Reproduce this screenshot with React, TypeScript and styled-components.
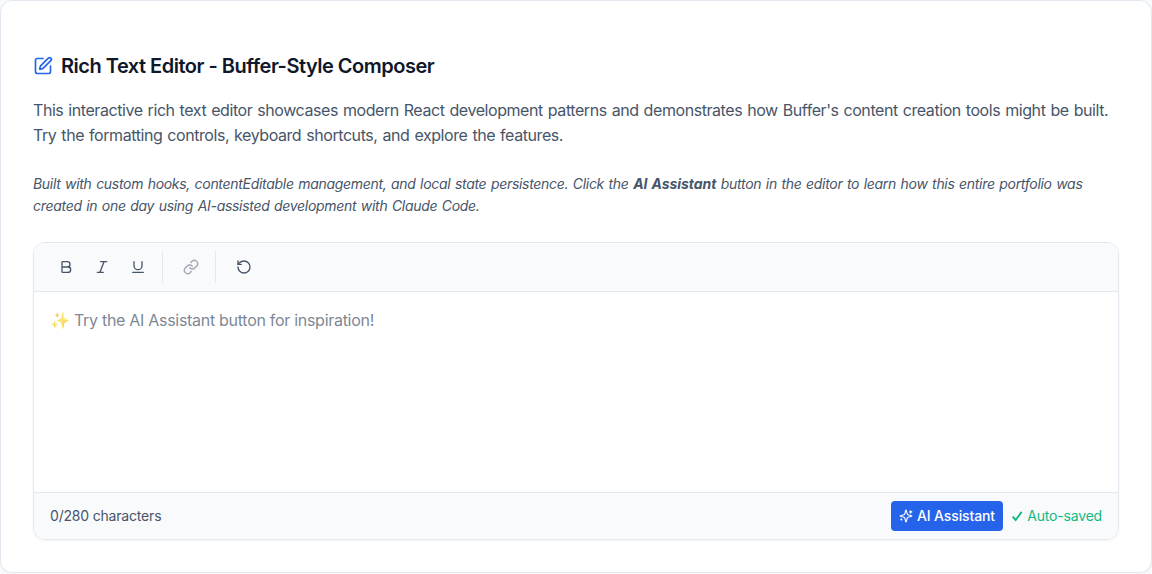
import React from 'react';
import styled, { createGlobalStyle } from 'styled-components';
import { Bold, Italic, Underline, Link, RotateCcw, SquarePen } from 'lucide-react';

const GlobalStyle = createGlobalStyle`
  *, *::before, *::after { box-sizing: border-box; }
  body { margin: 0; background: #f8fafc; font-family: Inter, sans-serif; color: #475569; }
`;
const Card = styled.section`
  height: 573px;
  padding: 52px 32px 32px;
  border: 1px solid #e2e8f0;
  border-radius: 12px;
  background: #fff;
  box-shadow: 0 1px 2px rgba(0, 0, 0, 0.05);
`;
const Title = styled.h3`
  display: flex;
  align-items: center;
  gap: 8px;
  margin: 0;
  font-size: 20px;
  line-height: 26px;
  font-weight: 600;
  letter-spacing: -0.495px;
  color: #0f172a;
`;
const Intro = styled.p`
  margin: 19px 0 0;
  font-size: 16px;
  line-height: 25px;
  letter-spacing: -0.43px;
  word-spacing: 0.9px;
`;
const Note = styled.p`
  margin: 25px 0 0;
  font-size: 14px;
  line-height: 22px;
  font-style: italic;
  letter-spacing: -0.3px;
  word-spacing: 0.9px;

  strong {
    letter-spacing: -0.06px;
  }
`;
const Editor = styled.div`
  margin-top: 25px;
  border: 1px solid #e2e8f0;
  border-radius: 12px;
  overflow: hidden;
  box-shadow: 0 1px 2px rgba(0, 0, 0, 0.05);
`;
const Toolbar = styled.div`
  display: flex;
  align-items: center;
  height: 49px;
  padding: 8px 16px;
  background: #f8fafc;
  border-bottom: 1px solid #e2e8f0;
`;
const Group = styled.div<{ $last?: boolean }>`
  display: flex;
  gap: 4px;
  padding-right: 8px;
  margin-right: 12px;
  border-right: ${(p) => (p.$last ? 'none' : '1px solid #e2e8f0')};
`;
const ToolButton = styled.button`
  display: flex;
  align-items: center;
  justify-content: center;
  width: 32px;
  height: 32px;
  padding: 0;
  border: 0;
  background: none;
  color: #475569;
  &:disabled { opacity: 0.5; }
`;
const Content = styled.div`
  height: 200px;
  padding: 16px;
  font-size: 16px;
  line-height: 25.6px;
  letter-spacing: -0.29px;
  color: #475569;
`;
const Placeholder = styled.span`
  opacity: 0.7;
`;
const Footer = styled.div`
  display: flex;
  align-items: center;
  justify-content: space-between;
  height: 47px;
  padding: 0 16px;
  background: #f8fafc;
  border-top: 1px solid #e2e8f0;
  font-size: 14px;
  line-height: 16px;
  letter-spacing: -0.19px;
`;
const Actions = styled.div`
  display: flex;
  align-items: center;
  gap: 8px;
`;
const AssistantButton = styled.button`
  display: flex;
  align-items: center;
  gap: 4px;
  width: 112px;
  height: 30px;
  padding: 0 8px;
  border: 0;
  border-radius: 4px;
  background: #2563eb;
  color: #fff;
  font: 500 14px/16px Inter, sans-serif;
  letter-spacing: -0.13px;
  white-space: nowrap;
`;
const Saved = styled.span`
  display: flex;
  align-items: center;
  gap: 3px;
  width: 91px;
  color: #10b981;
  white-space: nowrap;
`;

const SparkleIcon = () => (
  <svg width="14" height="14" viewBox="0 0 24 24" fill="none" stroke="currentColor" strokeWidth="2" strokeLinecap="round" strokeLinejoin="round">
    <path d="M9.937 15.5A2 2 0 0 0 8.5 14.063l-6.135-1.582a.5.5 0 0 1 0-.962L8.5 9.936A2 2 0 0 0 9.937 8.5l1.582-6.135a.5.5 0 0 1 .963 0L14.063 8.5A2 2 0 0 0 15.5 9.937l6.135 1.581a.5.5 0 0 1 0 .964L15.5 14.063a2 2 0 0 0-1.437 1.437l-1.582 6.135a.5.5 0 0 1-.963 0z" />
    <path d="M20 3v4M22 5h-4M4 17v2M5 18H3" />
  </svg>
);
const CheckIcon = () => (
  <svg width="14" height="14" viewBox="0 0 14 14" fill="none" stroke="currentColor" strokeWidth="2">
    <path d="M1.8 7.6 4.9 11.2 11.2 2.7" />
  </svg>
);

export default function App() {
  return (
    <>
      <GlobalStyle />
      <Card>
        <Title><SquarePen size={20} color="#2563eb" />Rich Text Editor - Buffer-Style Composer</Title>
        <Intro>
          This interactive rich text editor showcases modern React development patterns and demonstrates how Buffer's
          content creation tools might be built. Try the formatting controls, keyboard shortcuts, and explore the features.
        </Intro>
        <Note>
          Built with custom hooks, contentEditable management, and local state persistence. Click the <strong>AI Assistant</strong> button
          in the editor to learn how this entire portfolio was created in one day using AI-assisted development with Claude Code.
        </Note>
        <Editor>
          <Toolbar>
            <Group>
              <ToolButton aria-label="Bold"><Bold size={16} /></ToolButton>
              <ToolButton aria-label="Italic"><Italic size={16} /></ToolButton>
              <ToolButton aria-label="Underline"><Underline size={16} /></ToolButton>
            </Group>
            <Group>
              <ToolButton aria-label="Link" disabled><Link size={16} /></ToolButton>
            </Group>
            <Group $last>
              <ToolButton aria-label="Reset"><RotateCcw size={16} /></ToolButton>
            </Group>
          </Toolbar>
          <Content><Placeholder>✨ Try the AI Assistant button for inspiration!</Placeholder></Content>
          <Footer>
            <span>0/280 characters</span>
            <Actions>
              <AssistantButton><SparkleIcon />AI Assistant</AssistantButton>
              <Saved><CheckIcon />Auto-saved</Saved>
            </Actions>
          </Footer>
        </Editor>
      </Card>
    </>
  );
}
